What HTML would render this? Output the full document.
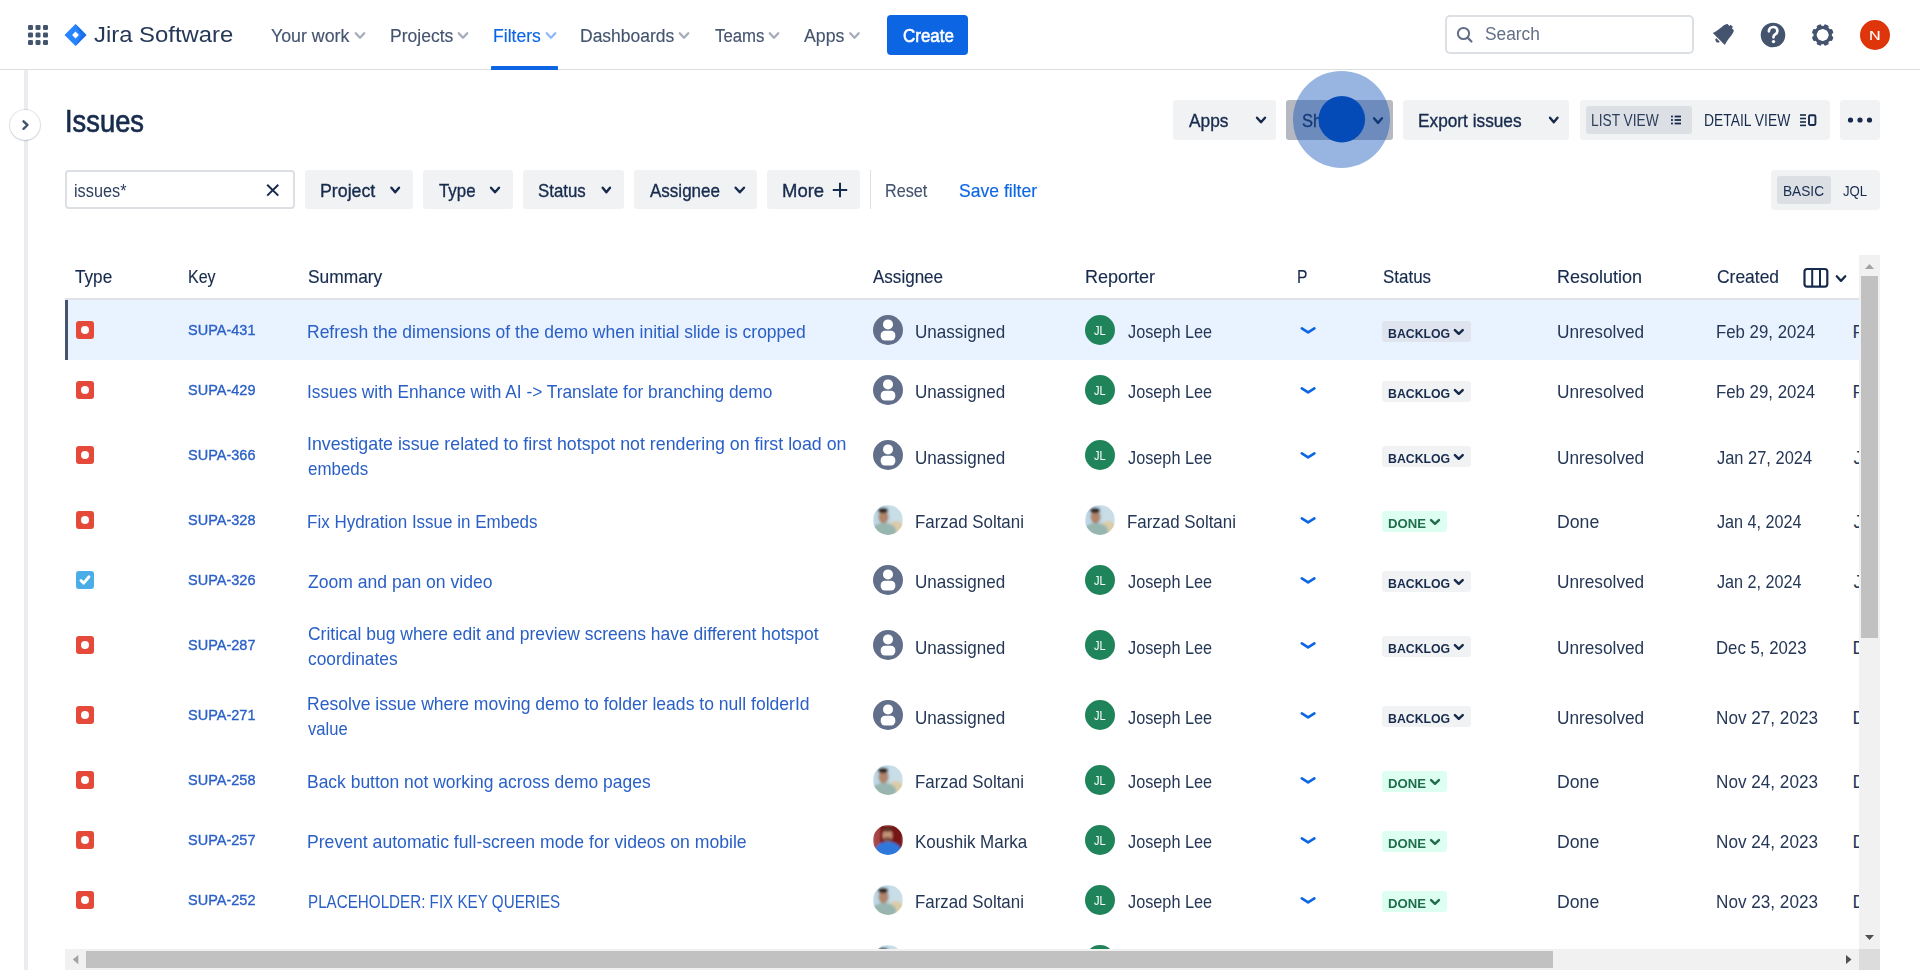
<!DOCTYPE html>
<html><head><meta charset="utf-8"><title>Issues - Jira</title>
<style>
html,body{margin:0;padding:0;width:1920px;height:970px;overflow:hidden;background:#fff;font-family:"Liberation Sans",sans-serif;}
body{position:relative;}
svg{position:absolute;overflow:visible;}
</style></head><body>
<div style="position:absolute;left:0px;top:69px;width:1920px;height:1px;background:#dddee2"></div>
<svg style="left:0;top:0" width="1" height="1"><rect x="28.0" y="25.0" width="5" height="5" rx="1.3" fill="#44546f"/><rect x="28.0" y="32.5" width="5" height="5" rx="1.3" fill="#44546f"/><rect x="28.0" y="40.0" width="5" height="5" rx="1.3" fill="#44546f"/><rect x="35.5" y="25.0" width="5" height="5" rx="1.3" fill="#44546f"/><rect x="35.5" y="32.5" width="5" height="5" rx="1.3" fill="#44546f"/><rect x="35.5" y="40.0" width="5" height="5" rx="1.3" fill="#44546f"/><rect x="43.0" y="25.0" width="5" height="5" rx="1.3" fill="#44546f"/><rect x="43.0" y="32.5" width="5" height="5" rx="1.3" fill="#44546f"/><rect x="43.0" y="40.0" width="5" height="5" rx="1.3" fill="#44546f"/></svg>
<svg style="left:0;top:0" width="1" height="1"><polygon points="75.5,24 86.5,35 75.5,46 64.5,35" fill="#2684ff"/><polygon points="75.5,24 86.5,35 75.5,46 81,35" fill="#1d6fe8"/><polygon points="75.5,31.6 78.9,35 75.5,38.4 72.1,35" fill="#ffffff"/></svg>
<div style="position:absolute;left:94.00px;top:24px;font-size:22px;line-height:22px;font-weight:400;color:#253858;white-space:nowrap;transform:scaleX(1.0847);transform-origin:0 0;">Jira Software</div>
<div style="position:absolute;left:271.00px;top:27px;font-size:18.8px;line-height:18.8px;font-weight:400;color:#44546f;white-space:nowrap;transform:scaleX(0.9469);transform-origin:0 0;-webkit-text-stroke:0.15px currentColor;">Your work</div>
<svg style="left:0;top:0" width="1" height="1"><polyline points="355.75,33.25 360.00,37.75 364.25,33.25" fill="none" stroke="#a5adba" stroke-width="2.3" stroke-linecap="round" stroke-linejoin="round"/></svg>
<div style="position:absolute;left:390.07px;top:27px;font-size:18.8px;line-height:18.8px;font-weight:400;color:#44546f;white-space:nowrap;transform:scaleX(0.9330);transform-origin:0 0;-webkit-text-stroke:0.15px currentColor;">Projects</div>
<svg style="left:0;top:0" width="1" height="1"><polyline points="458.75,33.25 463.00,37.75 467.25,33.25" fill="none" stroke="#a5adba" stroke-width="2.3" stroke-linecap="round" stroke-linejoin="round"/></svg>
<div style="position:absolute;left:493.07px;top:27px;font-size:18.8px;line-height:18.8px;font-weight:400;color:#0c66e4;white-space:nowrap;transform:scaleX(0.9350);transform-origin:0 0;-webkit-text-stroke:0.15px currentColor;">Filters</div>
<svg style="left:0;top:0" width="1" height="1"><polyline points="546.75,33.25 551.00,37.75 555.25,33.25" fill="none" stroke="#8fb8f6" stroke-width="2.3" stroke-linecap="round" stroke-linejoin="round"/></svg>
<div style="position:absolute;left:580.07px;top:27px;font-size:18.8px;line-height:18.8px;font-weight:400;color:#44546f;white-space:nowrap;transform:scaleX(0.9311);transform-origin:0 0;-webkit-text-stroke:0.15px currentColor;">Dashboards</div>
<svg style="left:0;top:0" width="1" height="1"><polyline points="679.75,33.25 684.00,37.75 688.25,33.25" fill="none" stroke="#a5adba" stroke-width="2.3" stroke-linecap="round" stroke-linejoin="round"/></svg>
<div style="position:absolute;left:715.00px;top:27px;font-size:18.8px;line-height:18.8px;font-weight:400;color:#44546f;white-space:nowrap;transform:scaleX(0.8921);transform-origin:0 0;-webkit-text-stroke:0.15px currentColor;">Teams</div>
<svg style="left:0;top:0" width="1" height="1"><polyline points="769.75,33.25 774.00,37.75 778.25,33.25" fill="none" stroke="#a5adba" stroke-width="2.3" stroke-linecap="round" stroke-linejoin="round"/></svg>
<div style="position:absolute;left:804.00px;top:27px;font-size:18.8px;line-height:18.8px;font-weight:400;color:#44546f;white-space:nowrap;transform:scaleX(0.9430);transform-origin:0 0;-webkit-text-stroke:0.15px currentColor;">Apps</div>
<svg style="left:0;top:0" width="1" height="1"><polyline points="850.25,33.25 854.50,37.75 858.75,33.25" fill="none" stroke="#a5adba" stroke-width="2.3" stroke-linecap="round" stroke-linejoin="round"/></svg>
<div style="position:absolute;left:491px;top:66px;width:67px;height:4px;background:#0c66e4;border-radius:1px 1px 0 0"></div>
<div style="position:absolute;left:887px;top:15px;width:80.79999999999995px;height:39.6px;background:#0c66e4;border-radius:4px"></div>
<div style="position:absolute;left:902.50px;top:27px;font-size:18.8px;line-height:18.8px;font-weight:400;color:#ffffff;white-space:nowrap;transform:scaleX(0.9030);transform-origin:0 0;-webkit-text-stroke:0.6px currentColor;">Create</div>
<div style="position:absolute;left:1445px;top:15px;width:249px;height:39px;box-sizing:border-box;border:2px solid #dcdfe4;border-radius:5px;background:#fff"></div>
<svg style="left:0;top:0" width="1" height="1"><circle cx="1463.5" cy="33.5" r="5.6" fill="none" stroke="#626f86" stroke-width="2"/><line x1="1467.6" y1="37.6" x2="1471.5" y2="41.5" stroke="#626f86" stroke-width="2.2" stroke-linecap="round"/></svg>
<div style="position:absolute;left:1485.00px;top:25px;font-size:18.8px;line-height:18.8px;font-weight:400;color:#626f86;white-space:nowrap;transform:scaleX(0.9228);transform-origin:0 0;">Search</div>
<svg style="left:0;top:0" width="1" height="1"><g transform="translate(1723.2,34.6) rotate(45)"><path d="M-8.5,6.2 L8.5,6.2 C7.4,3.5 6.8,-0.5 6.4,-4.5 C6.1,-8 5.2,-10.2 4.2,-10.6 L-4.2,-10.6 C-5.2,-10.2 -6.1,-8 -6.4,-4.5 C-6.8,-0.5 -7.4,3.5 -8.5,6.2 Z" fill="#44546f"/><rect x="-1.6" y="-12.2" width="3.2" height="2" fill="#44546f"/><path d="M-2.6,7.4 A2.6,2.6 0 0 0 2.6,7.4 Z" fill="#44546f"/></g></svg>
<svg style="left:0;top:0" width="1" height="1"><circle cx="1773" cy="35" r="12.3" fill="#44546f"/><path d="M1768.9,31.3 C1768.9,28.6 1770.8,27 1773.2,27 C1775.6,27 1777.4,28.6 1777.4,30.9 C1777.4,33.1 1775.9,33.9 1774.7,34.7 C1773.9,35.2 1773.5,35.9 1773.5,37.3" fill="none" stroke="#fff" stroke-width="2.7" stroke-linecap="round"/><circle cx="1773.5" cy="41.6" r="1.7" fill="#fff"/></svg>
<svg style="left:0;top:0" width="1" height="1"><g transform="translate(1822.7,35)"><rect x="-2.4" y="-10.9" width="4.8" height="5" rx="1.2" fill="#44546f" transform="rotate(22.5)"/><rect x="-2.4" y="-10.9" width="4.8" height="5" rx="1.2" fill="#44546f" transform="rotate(67.5)"/><rect x="-2.4" y="-10.9" width="4.8" height="5" rx="1.2" fill="#44546f" transform="rotate(112.5)"/><rect x="-2.4" y="-10.9" width="4.8" height="5" rx="1.2" fill="#44546f" transform="rotate(157.5)"/><rect x="-2.4" y="-10.9" width="4.8" height="5" rx="1.2" fill="#44546f" transform="rotate(202.5)"/><rect x="-2.4" y="-10.9" width="4.8" height="5" rx="1.2" fill="#44546f" transform="rotate(247.5)"/><rect x="-2.4" y="-10.9" width="4.8" height="5" rx="1.2" fill="#44546f" transform="rotate(292.5)"/><rect x="-2.4" y="-10.9" width="4.8" height="5" rx="1.2" fill="#44546f" transform="rotate(337.5)"/><circle cx="0" cy="0" r="7.7" fill="none" stroke="#44546f" stroke-width="3.2"/></g></svg>
<svg style="left:0;top:0" width="1" height="1"><circle cx="1875" cy="35" r="15" fill="#de350b"/></svg>
<div style="position:absolute;left:1869.31px;top:29px;font-size:13.5px;line-height:13.5px;font-weight:400;color:#ffffff;white-space:nowrap;transform:scaleX(1.1875);transform-origin:0 0;-webkit-text-stroke:0.15px currentColor;">N</div>
<div style="position:absolute;left:24px;top:70px;width:4px;height:900px;background:#ebecf0"></div>
<div style="position:absolute;left:9.5px;top:109.5px;width:30px;height:30px;border-radius:50%;background:#fff;box-shadow:0 0 0 1px rgba(9,30,66,0.10),0 1px 2px rgba(9,30,66,0.12)"></div>
<svg style="left:0;top:0" width="1" height="1"><polyline points="23.5,121.3 27.5,125 23.5,128.8" fill="none" stroke="#44546f" stroke-width="2.4" stroke-linecap="round" stroke-linejoin="round"/></svg>
<div style="position:absolute;left:64.91px;top:106px;font-size:30.5px;line-height:30.5px;font-weight:400;color:#172b4d;white-space:nowrap;transform:scaleX(0.8964);transform-origin:0 0;-webkit-text-stroke:0.7px currentColor;">Issues</div>
<div style="position:absolute;left:1173px;top:100px;width:103px;height:39.69999999999999px;background:#f1f2f4;border-radius:3px"></div>
<div style="position:absolute;left:1188.60px;top:112px;font-size:18.1px;line-height:18.1px;font-weight:400;color:#172b4d;white-space:nowrap;transform:scaleX(0.9564);transform-origin:0 0;-webkit-text-stroke:0.35px currentColor;">Apps</div>
<svg style="left:0;top:0" width="1" height="1"><polyline points="1257.00,117.70 1261.00,122.30 1265.00,117.70" fill="none" stroke="#172b4d" stroke-width="2.4" stroke-linecap="round" stroke-linejoin="round"/></svg>
<div style="position:absolute;left:1286px;top:100px;width:107px;height:39.69999999999999px;background:#b6b9c1;border-radius:3px"></div>
<div style="position:absolute;left:1302.00px;top:112px;font-size:18.1px;line-height:18.1px;font-weight:400;color:#172b4d;white-space:nowrap;transform:scaleX(0.9125);transform-origin:0 0;-webkit-text-stroke:0.35px currentColor;">Share</div>
<svg style="left:0;top:0" width="1" height="1"><polyline points="1374.00,118.30 1378.00,122.90 1382.00,118.30" fill="none" stroke="#172b4d" stroke-width="2.4" stroke-linecap="round" stroke-linejoin="round"/></svg>
<div style="position:absolute;left:1403px;top:100px;width:166px;height:39.69999999999999px;background:#f1f2f4;border-radius:3px"></div>
<div style="position:absolute;left:1418.05px;top:112px;font-size:18.1px;line-height:18.1px;font-weight:400;color:#172b4d;white-space:nowrap;transform:scaleX(0.9539);transform-origin:0 0;-webkit-text-stroke:0.35px currentColor;">Export issues</div>
<svg style="left:0;top:0" width="1" height="1"><polyline points="1550.00,117.70 1553.75,122.30 1557.50,117.70" fill="none" stroke="#172b4d" stroke-width="2.4" stroke-linecap="round" stroke-linejoin="round"/></svg>
<div style="position:absolute;left:1579.5px;top:100px;width:250.0px;height:39.69999999999999px;background:#f1f2f4;border-radius:4px"></div>
<div style="position:absolute;left:1586px;top:106px;width:106px;height:27.5px;background:#dcdfe4;border-radius:3px"></div>
<div style="position:absolute;left:1591.44px;top:113px;font-size:16px;line-height:16px;font-weight:400;color:#2c3e5d;white-space:nowrap;transform:scaleX(0.8592);transform-origin:0 0;">LIST VIEW</div>
<svg style="left:0;top:0" width="1" height="1"><rect x="1671" y="115.6" width="1.9" height="1.8" fill="#172b4d"/><rect x="1674.6" y="115.6" width="6.4" height="1.8" fill="#172b4d"/><rect x="1671" y="119.1" width="1.9" height="1.8" fill="#172b4d"/><rect x="1674.6" y="119.1" width="6.4" height="1.8" fill="#172b4d"/><rect x="1671" y="122.6" width="1.9" height="1.8" fill="#172b4d"/><rect x="1674.6" y="122.6" width="6.4" height="1.8" fill="#172b4d"/></svg>
<div style="position:absolute;left:1704.43px;top:113px;font-size:16px;line-height:16px;font-weight:400;color:#172b4d;white-space:nowrap;transform:scaleX(0.8665);transform-origin:0 0;">DETAIL VIEW</div>
<svg style="left:0;top:0" width="1" height="1"><rect x="1800" y="114.2" width="6" height="1.6" fill="#172b4d"/><rect x="1800" y="117.7" width="6" height="1.6" fill="#172b4d"/><rect x="1800" y="121.2" width="6" height="1.6" fill="#172b4d"/><rect x="1800" y="124.6" width="6" height="1.6" fill="#172b4d"/><rect x="1809" y="115.2" width="6.4" height="9.8" rx="1.2" fill="none" stroke="#172b4d" stroke-width="1.9"/></svg>
<div style="position:absolute;left:1840px;top:100px;width:40px;height:39.69999999999999px;background:#f1f2f4;border-radius:4px"></div>
<svg style="left:0;top:0" width="1" height="1"><circle cx="1850.5" cy="120" r="2.6" fill="#172b4d"/><circle cx="1860" cy="120" r="2.6" fill="#172b4d"/><circle cx="1869.5" cy="120" r="2.6" fill="#172b4d"/></svg>
<div style="position:absolute;left:65px;top:170px;width:230px;height:39px;box-sizing:border-box;border:2px solid #dcdfe4;border-radius:4px;background:#fff"></div>
<div style="position:absolute;left:74.13px;top:182px;font-size:18.8px;line-height:18.8px;font-weight:400;color:#2c3e5d;white-space:nowrap;transform:scaleX(0.8666);transform-origin:0 0;">issues*</div>
<svg style="left:0;top:0" width="1" height="1"><line x1="267.2" y1="184.8" x2="278.3" y2="195.6" stroke="#172b4d" stroke-width="2"/><line x1="278.3" y1="184.8" x2="267.2" y2="195.6" stroke="#172b4d" stroke-width="2"/></svg>
<div style="position:absolute;left:305px;top:170px;width:108px;height:39px;background:#f1f2f4;border-radius:3px"></div>
<div style="position:absolute;left:319.72px;top:182px;font-size:18.1px;line-height:18.1px;font-weight:400;color:#172b4d;white-space:nowrap;transform:scaleX(0.9822);transform-origin:0 0;-webkit-text-stroke:0.35px currentColor;">Project</div>
<svg style="left:0;top:0" width="1" height="1"><polyline points="391.40,187.70 395.20,192.30 399.00,187.70" fill="none" stroke="#172b4d" stroke-width="2.4" stroke-linecap="round" stroke-linejoin="round"/></svg>
<div style="position:absolute;left:423px;top:170px;width:90px;height:39px;background:#f1f2f4;border-radius:3px"></div>
<div style="position:absolute;left:438.50px;top:182px;font-size:18.1px;line-height:18.1px;font-weight:400;color:#172b4d;white-space:nowrap;transform:scaleX(0.9320);transform-origin:0 0;-webkit-text-stroke:0.35px currentColor;">Type</div>
<svg style="left:0;top:0" width="1" height="1"><polyline points="491.00,187.70 495.00,192.30 499.00,187.70" fill="none" stroke="#172b4d" stroke-width="2.4" stroke-linecap="round" stroke-linejoin="round"/></svg>
<div style="position:absolute;left:523px;top:170px;width:101px;height:39px;background:#f1f2f4;border-radius:3px"></div>
<div style="position:absolute;left:538.40px;top:182px;font-size:18.1px;line-height:18.1px;font-weight:400;color:#172b4d;white-space:nowrap;transform:scaleX(0.9288);transform-origin:0 0;-webkit-text-stroke:0.35px currentColor;">Status</div>
<svg style="left:0;top:0" width="1" height="1"><polyline points="602.70,187.70 606.35,192.30 610.00,187.70" fill="none" stroke="#172b4d" stroke-width="2.4" stroke-linecap="round" stroke-linejoin="round"/></svg>
<div style="position:absolute;left:634px;top:170px;width:123px;height:39px;background:#f1f2f4;border-radius:3px"></div>
<div style="position:absolute;left:649.80px;top:182px;font-size:18.1px;line-height:18.1px;font-weight:400;color:#172b4d;white-space:nowrap;transform:scaleX(0.9399);transform-origin:0 0;-webkit-text-stroke:0.35px currentColor;">Assignee</div>
<svg style="left:0;top:0" width="1" height="1"><polyline points="735.60,187.70 739.80,192.30 744.00,187.70" fill="none" stroke="#172b4d" stroke-width="2.4" stroke-linecap="round" stroke-linejoin="round"/></svg>
<div style="position:absolute;left:767px;top:170px;width:93px;height:39px;background:#f1f2f4;border-radius:3px"></div>
<div style="position:absolute;left:781.98px;top:182px;font-size:18.1px;line-height:18.1px;font-weight:400;color:#172b4d;white-space:nowrap;transform:scaleX(1.0209);transform-origin:0 0;-webkit-text-stroke:0.35px currentColor;">More</div>
<svg style="left:0;top:0" width="1" height="1"><line x1="832.8" y1="190" x2="847.2" y2="190" stroke="#172b4d" stroke-width="2"/><line x1="840" y1="182.8" x2="840" y2="197.2" stroke="#172b4d" stroke-width="2"/></svg>
<div style="position:absolute;left:870px;top:170px;width:1px;height:39px;background:#dcdfe4"></div>
<div style="position:absolute;left:885.40px;top:182px;font-size:18.1px;line-height:18.1px;font-weight:400;color:#44546f;white-space:nowrap;transform:scaleX(0.8953);transform-origin:0 0;-webkit-text-stroke:0.15px currentColor;">Reset</div>
<div style="position:absolute;left:959.00px;top:182px;font-size:18.1px;line-height:18.1px;font-weight:400;color:#0c66e4;white-space:nowrap;transform:scaleX(0.9699);transform-origin:0 0;-webkit-text-stroke:0.15px currentColor;">Save filter</div>
<div style="position:absolute;left:1771px;top:170px;width:109px;height:39.5px;background:#f1f2f4;border-radius:4px"></div>
<div style="position:absolute;left:1777px;top:176px;width:53.5px;height:27.69999999999999px;background:#dcdfe4;border-radius:3px"></div>
<div style="position:absolute;left:1782.87px;top:183px;font-size:15.5px;line-height:15.5px;font-weight:400;color:#172b4d;white-space:nowrap;transform:scaleX(0.8826);transform-origin:0 0;">BASIC</div>
<div style="position:absolute;left:1843.00px;top:183px;font-size:15.5px;line-height:15.5px;font-weight:400;color:#172b4d;white-space:nowrap;transform:scaleX(0.8505);transform-origin:0 0;">JQL</div>
<div style="position:absolute;left:75.40px;top:268px;font-size:18.1px;line-height:18.1px;font-weight:400;color:#172b4d;white-space:nowrap;transform:scaleX(0.9473);transform-origin:0 0;-webkit-text-stroke:0.15px currentColor;">Type</div>
<div style="position:absolute;left:187.82px;top:268px;font-size:18.1px;line-height:18.1px;font-weight:400;color:#172b4d;white-space:nowrap;transform:scaleX(0.8834);transform-origin:0 0;-webkit-text-stroke:0.15px currentColor;">Key</div>
<div style="position:absolute;left:308.00px;top:268px;font-size:18.1px;line-height:18.1px;font-weight:400;color:#172b4d;white-space:nowrap;transform:scaleX(0.9596);transform-origin:0 0;-webkit-text-stroke:0.15px currentColor;">Summary</div>
<div style="position:absolute;left:873.00px;top:268px;font-size:18.1px;line-height:18.1px;font-weight:400;color:#172b4d;white-space:nowrap;transform:scaleX(0.9412);transform-origin:0 0;-webkit-text-stroke:0.15px currentColor;">Assignee</div>
<div style="position:absolute;left:1084.51px;top:268px;font-size:18.1px;line-height:18.1px;font-weight:400;color:#172b4d;white-space:nowrap;transform:scaleX(0.9947);transform-origin:0 0;-webkit-text-stroke:0.15px currentColor;">Reporter</div>
<div style="position:absolute;left:1297.14px;top:268px;font-size:18.1px;line-height:18.1px;font-weight:400;color:#172b4d;white-space:nowrap;transform:scaleX(0.8636);transform-origin:0 0;-webkit-text-stroke:0.15px currentColor;">P</div>
<div style="position:absolute;left:1383.00px;top:268px;font-size:18.1px;line-height:18.1px;font-weight:400;color:#172b4d;white-space:nowrap;transform:scaleX(0.9366);transform-origin:0 0;-webkit-text-stroke:0.15px currentColor;">Status</div>
<div style="position:absolute;left:1557.01px;top:268px;font-size:18.1px;line-height:18.1px;font-weight:400;color:#172b4d;white-space:nowrap;transform:scaleX(0.9948);transform-origin:0 0;-webkit-text-stroke:0.15px currentColor;">Resolution</div>
<div style="position:absolute;left:1717.00px;top:268px;font-size:18.1px;line-height:18.1px;font-weight:400;color:#172b4d;white-space:nowrap;transform:scaleX(0.9635);transform-origin:0 0;-webkit-text-stroke:0.15px currentColor;">Created</div>
<svg style="left:0;top:0" width="1" height="1"><rect x="1804.5" y="269" width="22.8" height="17.6" rx="2.6" fill="none" stroke="#172b4d" stroke-width="2.2"/><line x1="1812.2" y1="269" x2="1812.2" y2="287" stroke="#172b4d" stroke-width="2"/><line x1="1820" y1="269" x2="1820" y2="287" stroke="#172b4d" stroke-width="2"/></svg>
<svg style="left:0;top:0" width="1" height="1"><polyline points="1836.75,276.30 1841.00,280.90 1845.25,276.30" fill="none" stroke="#172b4d" stroke-width="2.3" stroke-linecap="round" stroke-linejoin="round"/></svg>
<div style="position:absolute;left:65px;top:298px;width:1794px;height:2px;background:#dfe1e6"></div>
<div style="position:absolute;left:65px;top:300px;width:1794px;height:60px;background:#e9f2ff"></div>
<div style="position:absolute;left:65px;top:300px;width:3px;height:60px;background:#44546f"></div>
<svg style="left:0;top:0" width="1" height="1"><rect x="76" y="321.0" width="18" height="18" rx="3" fill="#e5493a"/><circle cx="85" cy="330.0" r="4" fill="#fff"/></svg>
<div style="position:absolute;left:187.80px;top:322px;font-size:15.3px;line-height:15.3px;font-weight:400;color:#2a60c6;white-space:nowrap;transform:scaleX(0.9486);transform-origin:0 0;-webkit-text-stroke:0.35px currentColor;">SUPA-431</div>
<div style="position:absolute;left:307.43px;top:323px;font-size:18.1px;line-height:18.1px;font-weight:400;color:#2a60c6;white-space:nowrap;transform:scaleX(0.9667);transform-origin:0 0;">Refresh the dimensions of the demo when initial slide is cropped</div>
<svg style="left:0;top:0" width="1" height="1"><circle cx="888" cy="330.0" r="15" fill="#626f8a"/><circle cx="888" cy="324.4" r="5" fill="#fff"/><rect x="880.7" y="330.8" width="14.6" height="9.6" rx="4.2" fill="#fff"/></svg>
<div style="position:absolute;left:914.86px;top:323px;font-size:18.1px;line-height:18.1px;font-weight:400;color:#253756;white-space:nowrap;transform:scaleX(0.9434);transform-origin:0 0;">Unassigned</div>
<svg style="left:0;top:0" width="1" height="1"><circle cx="1100" cy="330.0" r="15" fill="#1f845a"/></svg>
<div style="position:absolute;left:1093.80px;top:324px;font-size:13px;line-height:13px;font-weight:400;color:#ffffff;white-space:nowrap;transform:scaleX(0.8444);transform-origin:0 0;">JL</div>
<div style="position:absolute;left:1128.00px;top:323px;font-size:18.1px;line-height:18.1px;font-weight:400;color:#253756;white-space:nowrap;transform:scaleX(0.8984);transform-origin:0 0;">Joseph Lee</div>
<svg style="left:0;top:0" width="1" height="1"><polyline points="1301.80,328.40 1308.10,332.40 1314.40,328.40" fill="none" stroke="#0c66e4" stroke-width="2.6" stroke-linecap="round" stroke-linejoin="round"/></svg>
<div style="position:absolute;left:1382.3px;top:320.8px;width:88.40000000000009px;height:21.399999999999977px;background:#dfe4ee;border-radius:3px"></div>
<div style="position:absolute;left:1388.30px;top:327px;font-size:13.5px;line-height:13.5px;font-weight:700;color:#172b4d;white-space:nowrap;transform:scaleX(0.9108);transform-origin:0 0;">BACKLOG</div>
<svg style="left:0;top:0" width="1" height="1"><polyline points="1454.90,330.20 1458.80,333.80 1462.70,330.20" fill="none" stroke="#172b4d" stroke-width="2.5" stroke-linecap="round" stroke-linejoin="round"/></svg>
<div style="position:absolute;left:1557.35px;top:323px;font-size:18.1px;line-height:18.1px;font-weight:400;color:#253756;white-space:nowrap;transform:scaleX(0.9524);transform-origin:0 0;">Unresolved</div>
<div style="position:absolute;left:1716.37px;top:323px;font-size:18.1px;line-height:18.1px;font-weight:400;color:#253756;white-space:nowrap;transform:scaleX(0.9283);transform-origin:0 0;">Feb 29, 2024</div>
<div style="position:absolute;left:1852.50px;top:323px;font-size:18.1px;line-height:18.1px;font-weight:400;color:#253756;white-space:nowrap;">F</div>
<svg style="left:0;top:0" width="1" height="1"><rect x="76" y="381.0" width="18" height="18" rx="3" fill="#e5493a"/><circle cx="85" cy="390.0" r="4" fill="#fff"/></svg>
<div style="position:absolute;left:187.80px;top:382px;font-size:15.3px;line-height:15.3px;font-weight:400;color:#2a60c6;white-space:nowrap;transform:scaleX(0.9486);transform-origin:0 0;-webkit-text-stroke:0.35px currentColor;">SUPA-429</div>
<div style="position:absolute;left:307.44px;top:383px;font-size:18.1px;line-height:18.1px;font-weight:400;color:#2a60c6;white-space:nowrap;transform:scaleX(0.9568);transform-origin:0 0;">Issues with Enhance with AI -&gt; Translate for branching demo</div>
<svg style="left:0;top:0" width="1" height="1"><circle cx="888" cy="390.0" r="15" fill="#626f8a"/><circle cx="888" cy="384.4" r="5" fill="#fff"/><rect x="880.7" y="390.8" width="14.6" height="9.6" rx="4.2" fill="#fff"/></svg>
<div style="position:absolute;left:914.86px;top:383px;font-size:18.1px;line-height:18.1px;font-weight:400;color:#253756;white-space:nowrap;transform:scaleX(0.9434);transform-origin:0 0;">Unassigned</div>
<svg style="left:0;top:0" width="1" height="1"><circle cx="1100" cy="390.0" r="15" fill="#1f845a"/></svg>
<div style="position:absolute;left:1093.80px;top:384px;font-size:13px;line-height:13px;font-weight:400;color:#ffffff;white-space:nowrap;transform:scaleX(0.8444);transform-origin:0 0;">JL</div>
<div style="position:absolute;left:1128.00px;top:383px;font-size:18.1px;line-height:18.1px;font-weight:400;color:#253756;white-space:nowrap;transform:scaleX(0.8984);transform-origin:0 0;">Joseph Lee</div>
<svg style="left:0;top:0" width="1" height="1"><polyline points="1301.80,388.40 1308.10,392.40 1314.40,388.40" fill="none" stroke="#0c66e4" stroke-width="2.6" stroke-linecap="round" stroke-linejoin="round"/></svg>
<div style="position:absolute;left:1382.3px;top:380.8px;width:88.40000000000009px;height:21.399999999999977px;background:#f1f2f4;border-radius:3px"></div>
<div style="position:absolute;left:1388.30px;top:387px;font-size:13.5px;line-height:13.5px;font-weight:700;color:#172b4d;white-space:nowrap;transform:scaleX(0.9108);transform-origin:0 0;">BACKLOG</div>
<svg style="left:0;top:0" width="1" height="1"><polyline points="1454.90,390.20 1458.80,393.80 1462.70,390.20" fill="none" stroke="#172b4d" stroke-width="2.5" stroke-linecap="round" stroke-linejoin="round"/></svg>
<div style="position:absolute;left:1557.35px;top:383px;font-size:18.1px;line-height:18.1px;font-weight:400;color:#253756;white-space:nowrap;transform:scaleX(0.9524);transform-origin:0 0;">Unresolved</div>
<div style="position:absolute;left:1716.37px;top:383px;font-size:18.1px;line-height:18.1px;font-weight:400;color:#253756;white-space:nowrap;transform:scaleX(0.9283);transform-origin:0 0;">Feb 29, 2024</div>
<div style="position:absolute;left:1852.50px;top:383px;font-size:18.1px;line-height:18.1px;font-weight:400;color:#253756;white-space:nowrap;">F</div>
<svg style="left:0;top:0" width="1" height="1"><rect x="76" y="446.0" width="18" height="18" rx="3" fill="#e5493a"/><circle cx="85" cy="455.0" r="4" fill="#fff"/></svg>
<div style="position:absolute;left:187.80px;top:447px;font-size:15.3px;line-height:15.3px;font-weight:400;color:#2a60c6;white-space:nowrap;transform:scaleX(0.9486);transform-origin:0 0;-webkit-text-stroke:0.35px currentColor;">SUPA-366</div>
<div style="position:absolute;left:307.42px;top:435px;font-size:18.1px;line-height:18.1px;font-weight:400;color:#2a60c6;white-space:nowrap;transform:scaleX(0.9823);transform-origin:0 0;">Investigate issue related to first hotspot not rendering on first load on</div>
<div style="position:absolute;left:308.40px;top:460px;font-size:18.1px;line-height:18.1px;font-weight:400;color:#2a60c6;white-space:nowrap;transform:scaleX(0.9343);transform-origin:0 0;">embeds</div>
<svg style="left:0;top:0" width="1" height="1"><circle cx="888" cy="455.0" r="15" fill="#626f8a"/><circle cx="888" cy="449.4" r="5" fill="#fff"/><rect x="880.7" y="455.8" width="14.6" height="9.6" rx="4.2" fill="#fff"/></svg>
<div style="position:absolute;left:914.86px;top:449px;font-size:18.1px;line-height:18.1px;font-weight:400;color:#253756;white-space:nowrap;transform:scaleX(0.9434);transform-origin:0 0;">Unassigned</div>
<svg style="left:0;top:0" width="1" height="1"><circle cx="1100" cy="455.0" r="15" fill="#1f845a"/></svg>
<div style="position:absolute;left:1093.80px;top:449px;font-size:13px;line-height:13px;font-weight:400;color:#ffffff;white-space:nowrap;transform:scaleX(0.8444);transform-origin:0 0;">JL</div>
<div style="position:absolute;left:1128.00px;top:449px;font-size:18.1px;line-height:18.1px;font-weight:400;color:#253756;white-space:nowrap;transform:scaleX(0.8984);transform-origin:0 0;">Joseph Lee</div>
<svg style="left:0;top:0" width="1" height="1"><polyline points="1301.80,453.40 1308.10,457.40 1314.40,453.40" fill="none" stroke="#0c66e4" stroke-width="2.6" stroke-linecap="round" stroke-linejoin="round"/></svg>
<div style="position:absolute;left:1382.3px;top:445.8px;width:88.40000000000009px;height:21.399999999999977px;background:#f1f2f4;border-radius:3px"></div>
<div style="position:absolute;left:1388.30px;top:452px;font-size:13.5px;line-height:13.5px;font-weight:700;color:#172b4d;white-space:nowrap;transform:scaleX(0.9108);transform-origin:0 0;">BACKLOG</div>
<svg style="left:0;top:0" width="1" height="1"><polyline points="1454.90,455.20 1458.80,458.80 1462.70,455.20" fill="none" stroke="#172b4d" stroke-width="2.5" stroke-linecap="round" stroke-linejoin="round"/></svg>
<div style="position:absolute;left:1557.35px;top:449px;font-size:18.1px;line-height:18.1px;font-weight:400;color:#253756;white-space:nowrap;transform:scaleX(0.9524);transform-origin:0 0;">Unresolved</div>
<div style="position:absolute;left:1717.30px;top:449px;font-size:18.1px;line-height:18.1px;font-weight:400;color:#253756;white-space:nowrap;transform:scaleX(0.9085);transform-origin:0 0;">Jan 27, 2024</div>
<div style="position:absolute;left:1853.50px;top:449px;font-size:18.1px;line-height:18.1px;font-weight:400;color:#253756;white-space:nowrap;">J</div>
<svg style="left:0;top:0" width="1" height="1"><rect x="76" y="511.0" width="18" height="18" rx="3" fill="#e5493a"/><circle cx="85" cy="520.0" r="4" fill="#fff"/></svg>
<div style="position:absolute;left:187.80px;top:512px;font-size:15.3px;line-height:15.3px;font-weight:400;color:#2a60c6;white-space:nowrap;transform:scaleX(0.9486);transform-origin:0 0;-webkit-text-stroke:0.35px currentColor;">SUPA-328</div>
<div style="position:absolute;left:307.46px;top:513px;font-size:18.1px;line-height:18.1px;font-weight:400;color:#2a60c6;white-space:nowrap;transform:scaleX(0.9397);transform-origin:0 0;">Fix Hydration Issue in Embeds</div>
<svg style="left:0;top:0" width="1" height="1"><defs><clipPath id="av1"><circle cx="888" cy="520.0" r="15"/></clipPath></defs><filter id="bav1" x="-20%" y="-20%" width="140%" height="140%"><feGaussianBlur stdDeviation="0.9"/></filter><g clip-path="url(#av1)"><g filter="url(#bav1)"><rect x="873" y="505.0" width="30" height="30" fill="#bcd6e6"/><rect x="890" y="505.0" width="13" height="30" fill="#c9dde6"/><ellipse cx="896" cy="528.0" rx="8" ry="7" fill="#d9ccaa"/><ellipse cx="884" cy="531.0" rx="12" ry="8" fill="#98b6b0"/><ellipse cx="883.5" cy="517.0" rx="5" ry="6.5" fill="#b0856a"/><ellipse cx="883" cy="510.5" rx="5" ry="2.8" fill="#3a2a20"/></g></g></svg>
<div style="position:absolute;left:914.87px;top:513px;font-size:18.1px;line-height:18.1px;font-weight:400;color:#253756;white-space:nowrap;transform:scaleX(0.9333);transform-origin:0 0;">Farzad Soltani</div>
<svg style="left:0;top:0" width="1" height="1"><defs><clipPath id="av2"><circle cx="1100" cy="520.0" r="15"/></clipPath></defs><filter id="bav2" x="-20%" y="-20%" width="140%" height="140%"><feGaussianBlur stdDeviation="0.9"/></filter><g clip-path="url(#av2)"><g filter="url(#bav2)"><rect x="1085" y="505.0" width="30" height="30" fill="#bcd6e6"/><rect x="1102" y="505.0" width="13" height="30" fill="#c9dde6"/><ellipse cx="1108" cy="528.0" rx="8" ry="7" fill="#d9ccaa"/><ellipse cx="1096" cy="531.0" rx="12" ry="8" fill="#98b6b0"/><ellipse cx="1095.5" cy="517.0" rx="5" ry="6.5" fill="#b0856a"/><ellipse cx="1095" cy="510.5" rx="5" ry="2.8" fill="#3a2a20"/></g></g></svg>
<div style="position:absolute;left:1127.07px;top:513px;font-size:18.1px;line-height:18.1px;font-weight:400;color:#253756;white-space:nowrap;transform:scaleX(0.9333);transform-origin:0 0;">Farzad Soltani</div>
<svg style="left:0;top:0" width="1" height="1"><polyline points="1301.80,518.40 1308.10,522.40 1314.40,518.40" fill="none" stroke="#0c66e4" stroke-width="2.6" stroke-linecap="round" stroke-linejoin="round"/></svg>
<div style="position:absolute;left:1382.3px;top:510.8px;width:64.40000000000009px;height:21.400000000000034px;background:#dcfff1;border-radius:3px"></div>
<div style="position:absolute;left:1388.00px;top:517px;font-size:13.5px;line-height:13.5px;font-weight:700;color:#216e4e;white-space:nowrap;transform:scaleX(0.9744);transform-origin:0 0;">DONE</div>
<svg style="left:0;top:0" width="1" height="1"><polyline points="1431.10,520.20 1435.00,523.80 1438.90,520.20" fill="none" stroke="#216e4e" stroke-width="2.5" stroke-linecap="round" stroke-linejoin="round"/></svg>
<div style="position:absolute;left:1557.32px;top:513px;font-size:18.1px;line-height:18.1px;font-weight:400;color:#253756;white-space:nowrap;transform:scaleX(0.9765);transform-origin:0 0;">Done</div>
<div style="position:absolute;left:1717.30px;top:513px;font-size:18.1px;line-height:18.1px;font-weight:400;color:#253756;white-space:nowrap;transform:scaleX(0.8941);transform-origin:0 0;">Jan 4, 2024</div>
<div style="position:absolute;left:1853.50px;top:513px;font-size:18.1px;line-height:18.1px;font-weight:400;color:#253756;white-space:nowrap;">J</div>
<svg style="left:0;top:0" width="1" height="1"><rect x="76" y="571.0" width="18" height="18" rx="3" fill="#4bade8"/><polyline points="81,580.5 83.7,583.1 89,576.8" fill="none" stroke="#fff" stroke-width="2.9" stroke-linecap="round" stroke-linejoin="round"/></svg>
<div style="position:absolute;left:187.80px;top:572px;font-size:15.3px;line-height:15.3px;font-weight:400;color:#2a60c6;white-space:nowrap;transform:scaleX(0.9486);transform-origin:0 0;-webkit-text-stroke:0.35px currentColor;">SUPA-326</div>
<div style="position:absolute;left:308.40px;top:573px;font-size:18.1px;line-height:18.1px;font-weight:400;color:#2a60c6;white-space:nowrap;transform:scaleX(0.9703);transform-origin:0 0;">Zoom and pan on video</div>
<svg style="left:0;top:0" width="1" height="1"><circle cx="888" cy="580.0" r="15" fill="#626f8a"/><circle cx="888" cy="574.4" r="5" fill="#fff"/><rect x="880.7" y="580.8" width="14.6" height="9.6" rx="4.2" fill="#fff"/></svg>
<div style="position:absolute;left:914.86px;top:573px;font-size:18.1px;line-height:18.1px;font-weight:400;color:#253756;white-space:nowrap;transform:scaleX(0.9434);transform-origin:0 0;">Unassigned</div>
<svg style="left:0;top:0" width="1" height="1"><circle cx="1100" cy="580.0" r="15" fill="#1f845a"/></svg>
<div style="position:absolute;left:1093.80px;top:574px;font-size:13px;line-height:13px;font-weight:400;color:#ffffff;white-space:nowrap;transform:scaleX(0.8444);transform-origin:0 0;">JL</div>
<div style="position:absolute;left:1128.00px;top:573px;font-size:18.1px;line-height:18.1px;font-weight:400;color:#253756;white-space:nowrap;transform:scaleX(0.8984);transform-origin:0 0;">Joseph Lee</div>
<svg style="left:0;top:0" width="1" height="1"><polyline points="1301.80,578.40 1308.10,582.40 1314.40,578.40" fill="none" stroke="#0c66e4" stroke-width="2.6" stroke-linecap="round" stroke-linejoin="round"/></svg>
<div style="position:absolute;left:1382.3px;top:570.8px;width:88.40000000000009px;height:21.40000000000009px;background:#f1f2f4;border-radius:3px"></div>
<div style="position:absolute;left:1388.30px;top:577px;font-size:13.5px;line-height:13.5px;font-weight:700;color:#172b4d;white-space:nowrap;transform:scaleX(0.9108);transform-origin:0 0;">BACKLOG</div>
<svg style="left:0;top:0" width="1" height="1"><polyline points="1454.90,580.20 1458.80,583.80 1462.70,580.20" fill="none" stroke="#172b4d" stroke-width="2.5" stroke-linecap="round" stroke-linejoin="round"/></svg>
<div style="position:absolute;left:1557.35px;top:573px;font-size:18.1px;line-height:18.1px;font-weight:400;color:#253756;white-space:nowrap;transform:scaleX(0.9524);transform-origin:0 0;">Unresolved</div>
<div style="position:absolute;left:1717.30px;top:573px;font-size:18.1px;line-height:18.1px;font-weight:400;color:#253756;white-space:nowrap;transform:scaleX(0.8941);transform-origin:0 0;">Jan 2, 2024</div>
<div style="position:absolute;left:1853.50px;top:573px;font-size:18.1px;line-height:18.1px;font-weight:400;color:#253756;white-space:nowrap;">J</div>
<svg style="left:0;top:0" width="1" height="1"><rect x="76" y="636.0" width="18" height="18" rx="3" fill="#e5493a"/><circle cx="85" cy="645.0" r="4" fill="#fff"/></svg>
<div style="position:absolute;left:187.80px;top:637px;font-size:15.3px;line-height:15.3px;font-weight:400;color:#2a60c6;white-space:nowrap;transform:scaleX(0.9486);transform-origin:0 0;-webkit-text-stroke:0.35px currentColor;">SUPA-287</div>
<div style="position:absolute;left:308.40px;top:625px;font-size:18.1px;line-height:18.1px;font-weight:400;color:#2a60c6;white-space:nowrap;transform:scaleX(0.9658);transform-origin:0 0;">Critical bug where edit and preview screens have different hotspot</div>
<div style="position:absolute;left:308.40px;top:650px;font-size:18.1px;line-height:18.1px;font-weight:400;color:#2a60c6;white-space:nowrap;transform:scaleX(0.9583);transform-origin:0 0;">coordinates</div>
<svg style="left:0;top:0" width="1" height="1"><circle cx="888" cy="645.0" r="15" fill="#626f8a"/><circle cx="888" cy="639.4" r="5" fill="#fff"/><rect x="880.7" y="645.8" width="14.6" height="9.6" rx="4.2" fill="#fff"/></svg>
<div style="position:absolute;left:914.86px;top:639px;font-size:18.1px;line-height:18.1px;font-weight:400;color:#253756;white-space:nowrap;transform:scaleX(0.9434);transform-origin:0 0;">Unassigned</div>
<svg style="left:0;top:0" width="1" height="1"><circle cx="1100" cy="645.0" r="15" fill="#1f845a"/></svg>
<div style="position:absolute;left:1093.80px;top:639px;font-size:13px;line-height:13px;font-weight:400;color:#ffffff;white-space:nowrap;transform:scaleX(0.8444);transform-origin:0 0;">JL</div>
<div style="position:absolute;left:1128.00px;top:639px;font-size:18.1px;line-height:18.1px;font-weight:400;color:#253756;white-space:nowrap;transform:scaleX(0.8984);transform-origin:0 0;">Joseph Lee</div>
<svg style="left:0;top:0" width="1" height="1"><polyline points="1301.80,643.40 1308.10,647.40 1314.40,643.40" fill="none" stroke="#0c66e4" stroke-width="2.6" stroke-linecap="round" stroke-linejoin="round"/></svg>
<div style="position:absolute;left:1382.3px;top:635.8px;width:88.40000000000009px;height:21.40000000000009px;background:#f1f2f4;border-radius:3px"></div>
<div style="position:absolute;left:1388.30px;top:642px;font-size:13.5px;line-height:13.5px;font-weight:700;color:#172b4d;white-space:nowrap;transform:scaleX(0.9108);transform-origin:0 0;">BACKLOG</div>
<svg style="left:0;top:0" width="1" height="1"><polyline points="1454.90,645.20 1458.80,648.80 1462.70,645.20" fill="none" stroke="#172b4d" stroke-width="2.5" stroke-linecap="round" stroke-linejoin="round"/></svg>
<div style="position:absolute;left:1557.35px;top:639px;font-size:18.1px;line-height:18.1px;font-weight:400;color:#253756;white-space:nowrap;transform:scaleX(0.9524);transform-origin:0 0;">Unresolved</div>
<div style="position:absolute;left:1716.37px;top:639px;font-size:18.1px;line-height:18.1px;font-weight:400;color:#253756;white-space:nowrap;transform:scaleX(0.9274);transform-origin:0 0;">Dec 5, 2023</div>
<div style="position:absolute;left:1852.50px;top:639px;font-size:18.1px;line-height:18.1px;font-weight:400;color:#253756;white-space:nowrap;">D</div>
<svg style="left:0;top:0" width="1" height="1"><rect x="76" y="706.0" width="18" height="18" rx="3" fill="#e5493a"/><circle cx="85" cy="715.0" r="4" fill="#fff"/></svg>
<div style="position:absolute;left:187.80px;top:707px;font-size:15.3px;line-height:15.3px;font-weight:400;color:#2a60c6;white-space:nowrap;transform:scaleX(0.9486);transform-origin:0 0;-webkit-text-stroke:0.35px currentColor;">SUPA-271</div>
<div style="position:absolute;left:307.43px;top:695px;font-size:18.1px;line-height:18.1px;font-weight:400;color:#2a60c6;white-space:nowrap;transform:scaleX(0.9703);transform-origin:0 0;">Resolve issue where moving demo to folder leads to null folderId</div>
<div style="position:absolute;left:308.40px;top:720px;font-size:18.1px;line-height:18.1px;font-weight:400;color:#2a60c6;white-space:nowrap;transform:scaleX(0.9168);transform-origin:0 0;">value</div>
<svg style="left:0;top:0" width="1" height="1"><circle cx="888" cy="715.0" r="15" fill="#626f8a"/><circle cx="888" cy="709.4" r="5" fill="#fff"/><rect x="880.7" y="715.8" width="14.6" height="9.6" rx="4.2" fill="#fff"/></svg>
<div style="position:absolute;left:914.86px;top:709px;font-size:18.1px;line-height:18.1px;font-weight:400;color:#253756;white-space:nowrap;transform:scaleX(0.9434);transform-origin:0 0;">Unassigned</div>
<svg style="left:0;top:0" width="1" height="1"><circle cx="1100" cy="715.0" r="15" fill="#1f845a"/></svg>
<div style="position:absolute;left:1093.80px;top:709px;font-size:13px;line-height:13px;font-weight:400;color:#ffffff;white-space:nowrap;transform:scaleX(0.8444);transform-origin:0 0;">JL</div>
<div style="position:absolute;left:1128.00px;top:709px;font-size:18.1px;line-height:18.1px;font-weight:400;color:#253756;white-space:nowrap;transform:scaleX(0.8984);transform-origin:0 0;">Joseph Lee</div>
<svg style="left:0;top:0" width="1" height="1"><polyline points="1301.80,713.40 1308.10,717.40 1314.40,713.40" fill="none" stroke="#0c66e4" stroke-width="2.6" stroke-linecap="round" stroke-linejoin="round"/></svg>
<div style="position:absolute;left:1382.3px;top:705.8px;width:88.40000000000009px;height:21.40000000000009px;background:#f1f2f4;border-radius:3px"></div>
<div style="position:absolute;left:1388.30px;top:712px;font-size:13.5px;line-height:13.5px;font-weight:700;color:#172b4d;white-space:nowrap;transform:scaleX(0.9108);transform-origin:0 0;">BACKLOG</div>
<svg style="left:0;top:0" width="1" height="1"><polyline points="1454.90,715.20 1458.80,718.80 1462.70,715.20" fill="none" stroke="#172b4d" stroke-width="2.5" stroke-linecap="round" stroke-linejoin="round"/></svg>
<div style="position:absolute;left:1557.35px;top:709px;font-size:18.1px;line-height:18.1px;font-weight:400;color:#253756;white-space:nowrap;transform:scaleX(0.9524);transform-origin:0 0;">Unresolved</div>
<div style="position:absolute;left:1716.35px;top:709px;font-size:18.1px;line-height:18.1px;font-weight:400;color:#253756;white-space:nowrap;transform:scaleX(0.9477);transform-origin:0 0;">Nov 27, 2023</div>
<div style="position:absolute;left:1852.50px;top:709px;font-size:18.1px;line-height:18.1px;font-weight:400;color:#253756;white-space:nowrap;">D</div>
<svg style="left:0;top:0" width="1" height="1"><rect x="76" y="771.0" width="18" height="18" rx="3" fill="#e5493a"/><circle cx="85" cy="780.0" r="4" fill="#fff"/></svg>
<div style="position:absolute;left:187.80px;top:772px;font-size:15.3px;line-height:15.3px;font-weight:400;color:#2a60c6;white-space:nowrap;transform:scaleX(0.9486);transform-origin:0 0;-webkit-text-stroke:0.35px currentColor;">SUPA-258</div>
<div style="position:absolute;left:307.43px;top:773px;font-size:18.1px;line-height:18.1px;font-weight:400;color:#2a60c6;white-space:nowrap;transform:scaleX(0.9651);transform-origin:0 0;">Back button not working across demo pages</div>
<svg style="left:0;top:0" width="1" height="1"><defs><clipPath id="av3"><circle cx="888" cy="780.0" r="15"/></clipPath></defs><filter id="bav3" x="-20%" y="-20%" width="140%" height="140%"><feGaussianBlur stdDeviation="0.9"/></filter><g clip-path="url(#av3)"><g filter="url(#bav3)"><rect x="873" y="765.0" width="30" height="30" fill="#bcd6e6"/><rect x="890" y="765.0" width="13" height="30" fill="#c9dde6"/><ellipse cx="896" cy="788.0" rx="8" ry="7" fill="#d9ccaa"/><ellipse cx="884" cy="791.0" rx="12" ry="8" fill="#98b6b0"/><ellipse cx="883.5" cy="777.0" rx="5" ry="6.5" fill="#b0856a"/><ellipse cx="883" cy="770.5" rx="5" ry="2.8" fill="#3a2a20"/></g></g></svg>
<div style="position:absolute;left:914.87px;top:773px;font-size:18.1px;line-height:18.1px;font-weight:400;color:#253756;white-space:nowrap;transform:scaleX(0.9333);transform-origin:0 0;">Farzad Soltani</div>
<svg style="left:0;top:0" width="1" height="1"><circle cx="1100" cy="780.0" r="15" fill="#1f845a"/></svg>
<div style="position:absolute;left:1093.80px;top:774px;font-size:13px;line-height:13px;font-weight:400;color:#ffffff;white-space:nowrap;transform:scaleX(0.8444);transform-origin:0 0;">JL</div>
<div style="position:absolute;left:1128.00px;top:773px;font-size:18.1px;line-height:18.1px;font-weight:400;color:#253756;white-space:nowrap;transform:scaleX(0.8984);transform-origin:0 0;">Joseph Lee</div>
<svg style="left:0;top:0" width="1" height="1"><polyline points="1301.80,778.40 1308.10,782.40 1314.40,778.40" fill="none" stroke="#0c66e4" stroke-width="2.6" stroke-linecap="round" stroke-linejoin="round"/></svg>
<div style="position:absolute;left:1382.3px;top:770.8px;width:64.40000000000009px;height:21.40000000000009px;background:#dcfff1;border-radius:3px"></div>
<div style="position:absolute;left:1388.00px;top:777px;font-size:13.5px;line-height:13.5px;font-weight:700;color:#216e4e;white-space:nowrap;transform:scaleX(0.9744);transform-origin:0 0;">DONE</div>
<svg style="left:0;top:0" width="1" height="1"><polyline points="1431.10,780.20 1435.00,783.80 1438.90,780.20" fill="none" stroke="#216e4e" stroke-width="2.5" stroke-linecap="round" stroke-linejoin="round"/></svg>
<div style="position:absolute;left:1557.32px;top:773px;font-size:18.1px;line-height:18.1px;font-weight:400;color:#253756;white-space:nowrap;transform:scaleX(0.9765);transform-origin:0 0;">Done</div>
<div style="position:absolute;left:1716.35px;top:773px;font-size:18.1px;line-height:18.1px;font-weight:400;color:#253756;white-space:nowrap;transform:scaleX(0.9477);transform-origin:0 0;">Nov 24, 2023</div>
<div style="position:absolute;left:1852.50px;top:773px;font-size:18.1px;line-height:18.1px;font-weight:400;color:#253756;white-space:nowrap;">D</div>
<svg style="left:0;top:0" width="1" height="1"><rect x="76" y="831.0" width="18" height="18" rx="3" fill="#e5493a"/><circle cx="85" cy="840.0" r="4" fill="#fff"/></svg>
<div style="position:absolute;left:187.80px;top:832px;font-size:15.3px;line-height:15.3px;font-weight:400;color:#2a60c6;white-space:nowrap;transform:scaleX(0.9486);transform-origin:0 0;-webkit-text-stroke:0.35px currentColor;">SUPA-257</div>
<div style="position:absolute;left:307.43px;top:833px;font-size:18.1px;line-height:18.1px;font-weight:400;color:#2a60c6;white-space:nowrap;transform:scaleX(0.9736);transform-origin:0 0;">Prevent automatic full-screen mode for videos on mobile</div>
<svg style="left:0;top:0" width="1" height="1"><defs><clipPath id="av4"><circle cx="888" cy="840.0" r="15"/></clipPath></defs><filter id="bav4" x="-20%" y="-20%" width="140%" height="140%"><feGaussianBlur stdDeviation="0.9"/></filter><g clip-path="url(#av4)"><g filter="url(#bav4)"><rect x="873" y="825.0" width="30" height="30" fill="#781418"/><rect x="873" y="825.0" width="7" height="30" fill="#a84444"/><ellipse cx="888" cy="851.0" rx="13" ry="9.5" fill="#2d78dc"/><ellipse cx="887.5" cy="835.5" rx="5" ry="6.5" fill="#c39276"/><ellipse cx="887.5" cy="839.5" rx="4" ry="2.5" fill="#7a5040"/><ellipse cx="887.5" cy="829.5" rx="4.5" ry="2.2" fill="#5a3020"/></g></g></svg>
<div style="position:absolute;left:914.86px;top:833px;font-size:18.1px;line-height:18.1px;font-weight:400;color:#253756;white-space:nowrap;transform:scaleX(0.9381);transform-origin:0 0;">Koushik Marka</div>
<svg style="left:0;top:0" width="1" height="1"><circle cx="1100" cy="840.0" r="15" fill="#1f845a"/></svg>
<div style="position:absolute;left:1093.80px;top:834px;font-size:13px;line-height:13px;font-weight:400;color:#ffffff;white-space:nowrap;transform:scaleX(0.8444);transform-origin:0 0;">JL</div>
<div style="position:absolute;left:1128.00px;top:833px;font-size:18.1px;line-height:18.1px;font-weight:400;color:#253756;white-space:nowrap;transform:scaleX(0.8984);transform-origin:0 0;">Joseph Lee</div>
<svg style="left:0;top:0" width="1" height="1"><polyline points="1301.80,838.40 1308.10,842.40 1314.40,838.40" fill="none" stroke="#0c66e4" stroke-width="2.6" stroke-linecap="round" stroke-linejoin="round"/></svg>
<div style="position:absolute;left:1382.3px;top:830.8px;width:64.40000000000009px;height:21.40000000000009px;background:#dcfff1;border-radius:3px"></div>
<div style="position:absolute;left:1388.00px;top:837px;font-size:13.5px;line-height:13.5px;font-weight:700;color:#216e4e;white-space:nowrap;transform:scaleX(0.9744);transform-origin:0 0;">DONE</div>
<svg style="left:0;top:0" width="1" height="1"><polyline points="1431.10,840.20 1435.00,843.80 1438.90,840.20" fill="none" stroke="#216e4e" stroke-width="2.5" stroke-linecap="round" stroke-linejoin="round"/></svg>
<div style="position:absolute;left:1557.32px;top:833px;font-size:18.1px;line-height:18.1px;font-weight:400;color:#253756;white-space:nowrap;transform:scaleX(0.9765);transform-origin:0 0;">Done</div>
<div style="position:absolute;left:1716.35px;top:833px;font-size:18.1px;line-height:18.1px;font-weight:400;color:#253756;white-space:nowrap;transform:scaleX(0.9477);transform-origin:0 0;">Nov 24, 2023</div>
<div style="position:absolute;left:1852.50px;top:833px;font-size:18.1px;line-height:18.1px;font-weight:400;color:#253756;white-space:nowrap;">D</div>
<svg style="left:0;top:0" width="1" height="1"><rect x="76" y="891.0" width="18" height="18" rx="3" fill="#e5493a"/><circle cx="85" cy="900.0" r="4" fill="#fff"/></svg>
<div style="position:absolute;left:187.80px;top:892px;font-size:15.3px;line-height:15.3px;font-weight:400;color:#2a60c6;white-space:nowrap;transform:scaleX(0.9486);transform-origin:0 0;-webkit-text-stroke:0.35px currentColor;">SUPA-252</div>
<div style="position:absolute;left:307.56px;top:893px;font-size:18.1px;line-height:18.1px;font-weight:400;color:#2a60c6;white-space:nowrap;transform:scaleX(0.8399);transform-origin:0 0;">PLACEHOLDER: FIX KEY QUERIES</div>
<svg style="left:0;top:0" width="1" height="1"><defs><clipPath id="av5"><circle cx="888" cy="900.0" r="15"/></clipPath></defs><filter id="bav5" x="-20%" y="-20%" width="140%" height="140%"><feGaussianBlur stdDeviation="0.9"/></filter><g clip-path="url(#av5)"><g filter="url(#bav5)"><rect x="873" y="885.0" width="30" height="30" fill="#bcd6e6"/><rect x="890" y="885.0" width="13" height="30" fill="#c9dde6"/><ellipse cx="896" cy="908.0" rx="8" ry="7" fill="#d9ccaa"/><ellipse cx="884" cy="911.0" rx="12" ry="8" fill="#98b6b0"/><ellipse cx="883.5" cy="897.0" rx="5" ry="6.5" fill="#b0856a"/><ellipse cx="883" cy="890.5" rx="5" ry="2.8" fill="#3a2a20"/></g></g></svg>
<div style="position:absolute;left:914.87px;top:893px;font-size:18.1px;line-height:18.1px;font-weight:400;color:#253756;white-space:nowrap;transform:scaleX(0.9333);transform-origin:0 0;">Farzad Soltani</div>
<svg style="left:0;top:0" width="1" height="1"><circle cx="1100" cy="900.0" r="15" fill="#1f845a"/></svg>
<div style="position:absolute;left:1093.80px;top:894px;font-size:13px;line-height:13px;font-weight:400;color:#ffffff;white-space:nowrap;transform:scaleX(0.8444);transform-origin:0 0;">JL</div>
<div style="position:absolute;left:1128.00px;top:893px;font-size:18.1px;line-height:18.1px;font-weight:400;color:#253756;white-space:nowrap;transform:scaleX(0.8984);transform-origin:0 0;">Joseph Lee</div>
<svg style="left:0;top:0" width="1" height="1"><polyline points="1301.80,898.40 1308.10,902.40 1314.40,898.40" fill="none" stroke="#0c66e4" stroke-width="2.6" stroke-linecap="round" stroke-linejoin="round"/></svg>
<div style="position:absolute;left:1382.3px;top:890.8px;width:64.40000000000009px;height:21.40000000000009px;background:#dcfff1;border-radius:3px"></div>
<div style="position:absolute;left:1388.00px;top:897px;font-size:13.5px;line-height:13.5px;font-weight:700;color:#216e4e;white-space:nowrap;transform:scaleX(0.9744);transform-origin:0 0;">DONE</div>
<svg style="left:0;top:0" width="1" height="1"><polyline points="1431.10,900.20 1435.00,903.80 1438.90,900.20" fill="none" stroke="#216e4e" stroke-width="2.5" stroke-linecap="round" stroke-linejoin="round"/></svg>
<div style="position:absolute;left:1557.32px;top:893px;font-size:18.1px;line-height:18.1px;font-weight:400;color:#253756;white-space:nowrap;transform:scaleX(0.9765);transform-origin:0 0;">Done</div>
<div style="position:absolute;left:1716.35px;top:893px;font-size:18.1px;line-height:18.1px;font-weight:400;color:#253756;white-space:nowrap;transform:scaleX(0.9477);transform-origin:0 0;">Nov 23, 2023</div>
<div style="position:absolute;left:1852.50px;top:893px;font-size:18.1px;line-height:18.1px;font-weight:400;color:#253756;white-space:nowrap;">D</div>
<svg style="left:0;top:0" width="1" height="1"><defs><clipPath id="av6"><circle cx="888" cy="960" r="15"/></clipPath></defs><filter id="bav6" x="-20%" y="-20%" width="140%" height="140%"><feGaussianBlur stdDeviation="0.9"/></filter><g clip-path="url(#av6)"><g filter="url(#bav6)"><rect x="873" y="945" width="30" height="30" fill="#bcd6e6"/><rect x="890" y="945" width="13" height="30" fill="#c9dde6"/><ellipse cx="896" cy="968" rx="8" ry="7" fill="#d9ccaa"/><ellipse cx="884" cy="971" rx="12" ry="8" fill="#98b6b0"/><ellipse cx="883.5" cy="957" rx="5" ry="6.5" fill="#b0856a"/><ellipse cx="883" cy="950.5" rx="5" ry="2.8" fill="#3a2a20"/></g></g></svg>
<svg style="left:0;top:0" width="1" height="1"><circle cx="1100" cy="960" r="15" fill="#1f845a"/></svg>
<div style="position:absolute;left:1093.80px;top:954px;font-size:13px;line-height:13px;font-weight:400;color:#ffffff;white-space:nowrap;transform:scaleX(0.8444);transform-origin:0 0;">JL</div>
<div style="position:absolute;left:1859px;top:255px;width:61px;height:715px;background:#ffffff"></div>
<div style="position:absolute;left:1859px;top:255px;width:21px;height:694px;background:#f1f1f1"></div>
<div style="position:absolute;left:1861px;top:276px;width:17px;height:361.70000000000005px;background:#c1c1c1"></div>
<svg style="left:0;top:0" width="1" height="1"><polygon points="1865,269 1874,269 1869.5,264" fill="#a3a3a3"/><polygon points="1865,935 1874,935 1869.5,940" fill="#505050"/></svg>
<div style="position:absolute;left:65px;top:949px;width:1794px;height:21px;background:#f1f1f1"></div>
<div style="position:absolute;left:86px;top:951px;width:1467px;height:17px;background:#c1c1c1"></div>
<div style="position:absolute;left:1859px;top:949px;width:21px;height:21px;background:#dcdcdc"></div>
<svg style="left:0;top:0" width="1" height="1"><polygon points="78.3,955 78.3,964.2 72.8,959.6" fill="#a3a3a3"/><polygon points="1846,955 1846,964 1851.5,959.5" fill="#505050"/></svg>
<svg style="left:0;top:0" width="1" height="1"><circle cx="1341.5" cy="119.4" r="48.5" fill="rgba(4,76,184,0.41)"/><circle cx="1341.8" cy="119.3" r="23.3" fill="#044bb8"/></svg>
</body></html>
